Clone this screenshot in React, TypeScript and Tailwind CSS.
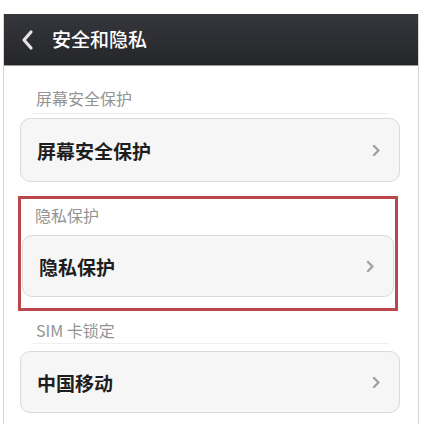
import React from 'react';

const font = { fontFamily: '"Noto Sans CJK SC", "Noto Sans", sans-serif' };

const Chevron = () => (
  <svg width="9" height="13" viewBox="0 0 9 13" className="shrink-0">
    <path d="M2 2 L6.5 6.5 L2 11" fill="none" stroke="#a0a0a0" strokeWidth="2.4" strokeLinecap="round" strokeLinejoin="round" />
  </svg>
);

const Card = ({ title, className = '' }: { title: string; className?: string }) => (
  <div className={`flex items-center justify-between rounded-[10px] border border-[#dadada] bg-[#f6f6f6] pl-[16px] pr-[18px] ${className}`}>
    <span className="text-[19px] font-semibold leading-none text-[#1e1e1e]">{title}</span>
    <Chevron />
  </div>
);

const App = () => {
  return (
    <div className="h-[424px] w-[426px] overflow-hidden bg-white" style={font}>
      <div className="h-[14px]" />
      <div className="ml-[3px] h-[410px] w-[416px] border-x border-[#d6d6d6]">
        {/* Header */}
        <div className="flex h-[52px] items-center border-b border-[#9a9a9a] bg-gradient-to-b from-[#36373c] to-[#25262a] pl-[16px]">
          <svg width="16" height="22" viewBox="0 0 16 22">
            <path d="M11 3 L4 11 L11 19" fill="none" stroke="#e4e4e4" strokeWidth="3.2" strokeLinecap="round" strokeLinejoin="round" />
          </svg>
          <span className="ml-[16px] text-[19px] font-medium text-white">安全和隐私</span>
        </div>

        {/* Section 1 */}
        <div className="mx-[29px] border-b border-[#efefef] pt-[22px] pb-[5px] pl-[3px]">
          <span className="block text-[16px] leading-[20px] text-[#939393]">屏幕安全保护</span>
        </div>
        <Card title="屏幕安全保护" className="mt-[4px] ml-[16px] mr-[18px] h-[64px]" />

        {/* Section 2 highlighted */}
        <div className="mt-[14px] ml-[14px] mr-[20px] h-[115px] border-[3px] border-[#b9474b] pt-[6px]">
          <span className="block pl-[14px] text-[16px] leading-[20px] text-[#939393]">隐私保护</span>
          <Card title="隐私保护" className="mt-[10px] mx-[1px] h-[62px] pr-[16px]" />
        </div>

        {/* Section 3 */}
        <div className="mx-[29px] border-b border-[#efefef] pt-[9px] pb-[3px] pl-[3px]">
          <span className="block text-[16px] leading-[20px] text-[#939393]">SIM 卡锁定</span>
        </div>
        <Card title="中国移动" className="mt-[7px] ml-[16px] mr-[18px] h-[62px]" />
      </div>
    </div>
  );
};

export default App;
